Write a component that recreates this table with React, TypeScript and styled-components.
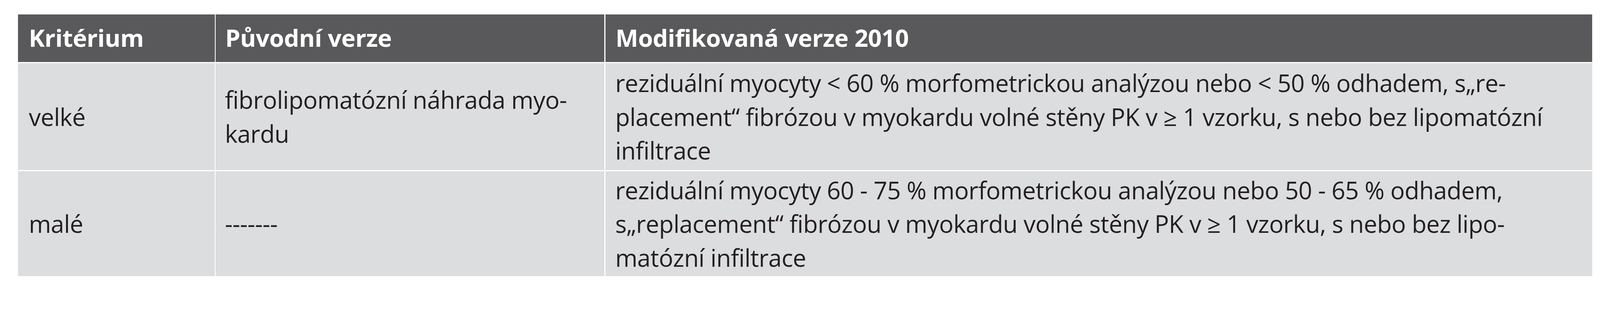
import React from "react";
import styled, { createGlobalStyle } from "styled-components";

// the frame is 4390 picture pixels wide; size everything against it
const u = (n: number) => `calc(${n} * 100vw / 4390)`;

const GlobalStyle = createGlobalStyle`
    html, body {
        margin: 0;
        padding: 0;
        background: #ffffff;
        overflow: hidden;
    }
`;

const Page = styled.div`
    padding: ${u(40)} 0 0 ${u(49)};
    font-family: "Open Sans", "Noto Sans", sans-serif;
`;

const Grid = styled.div`
    display: grid;
    width: ${u(4320)};
    grid-template-columns: ${u(540)} ${u(1066)} ${u(2708)};
    grid-template-rows: ${u(130)} ${u(293)} ${u(288)};
    column-gap: ${u(3)};
    row-gap: ${u(4)};
`;

const HeadCell = styled.div<{ $pad?: number }>`
    display: flex;
    align-items: center;
    padding: 0 0 ${u(4)} ${p => u(p.$pad ?? 30)};
    background: #59595b;
    color: #ffffff;
    font-weight: 700;
    font-size: ${u(66)};
    letter-spacing: ${u(-0.5)};
`;

const BodyCell = styled.div<{ $pad?: number }>`
    display: flex;
    align-items: center;
    padding: 0 0 0 ${p => u(p.$pad ?? 28)};
    background: #dcdddf;
    color: #231f20;
    font-size: ${u(66)};
    line-height: ${u(93)};
    letter-spacing: ${u(-0.6)};
`;

const Lines = styled.div`
    white-space: nowrap;
`;

type Row = { label: string; original: string[]; modified: string[] };

const rows: Row[] = [
    {
        label: "velké",
        original: ["fibrolipomatózní náhrada myo-", "kardu"],
        modified: [
            "reziduální myocyty < 60 % morfometrickou analýzou nebo < 50 % odhadem, s„re-",
            "placement“ fibrózou v myokardu volné stěny PK v ≥ 1 vzorku, s nebo bez lipomatózní",
            "infiltrace",
        ],
    },
    {
        label: "malé",
        original: ["-------"],
        modified: [
            "reziduální myocyty 60 - 75 % morfometrickou analýzou nebo 50 - 65 % odhadem,",
            "s„replacement“ fibrózou v myokardu volné stěny PK v ≥ 1 vzorku, s nebo bez lipo-",
            "matózní infiltrace",
        ],
    },
];

const Text: React.FC<{ lines: string[] }> = ({ lines }) => (
    <Lines>
        {lines.map((l, i) => (
            <React.Fragment key={i}>
                {l}
                {i < lines.length - 1 && <br />}
            </React.Fragment>
        ))}
    </Lines>
);

const App = () => {
    return (
        <>
            <GlobalStyle />
            <Page>
                <Grid>
                    <HeadCell $pad={30}>Kritérium</HeadCell>
                    <HeadCell $pad={26}>Původní verze</HeadCell>
                    <HeadCell $pad={28}>Modifikovaná verze 2010</HeadCell>
                    {rows.map(r => (
                        <React.Fragment key={r.label}>
                            <BodyCell $pad={30}>{r.label}</BodyCell>
                            <BodyCell $pad={25}>
                                <Text lines={r.original} />
                            </BodyCell>
                            <BodyCell $pad={27}>
                                <Text lines={r.modified} />
                            </BodyCell>
                        </React.Fragment>
                    ))}
                </Grid>
            </Page>
        </>
    );
};

export default App;
